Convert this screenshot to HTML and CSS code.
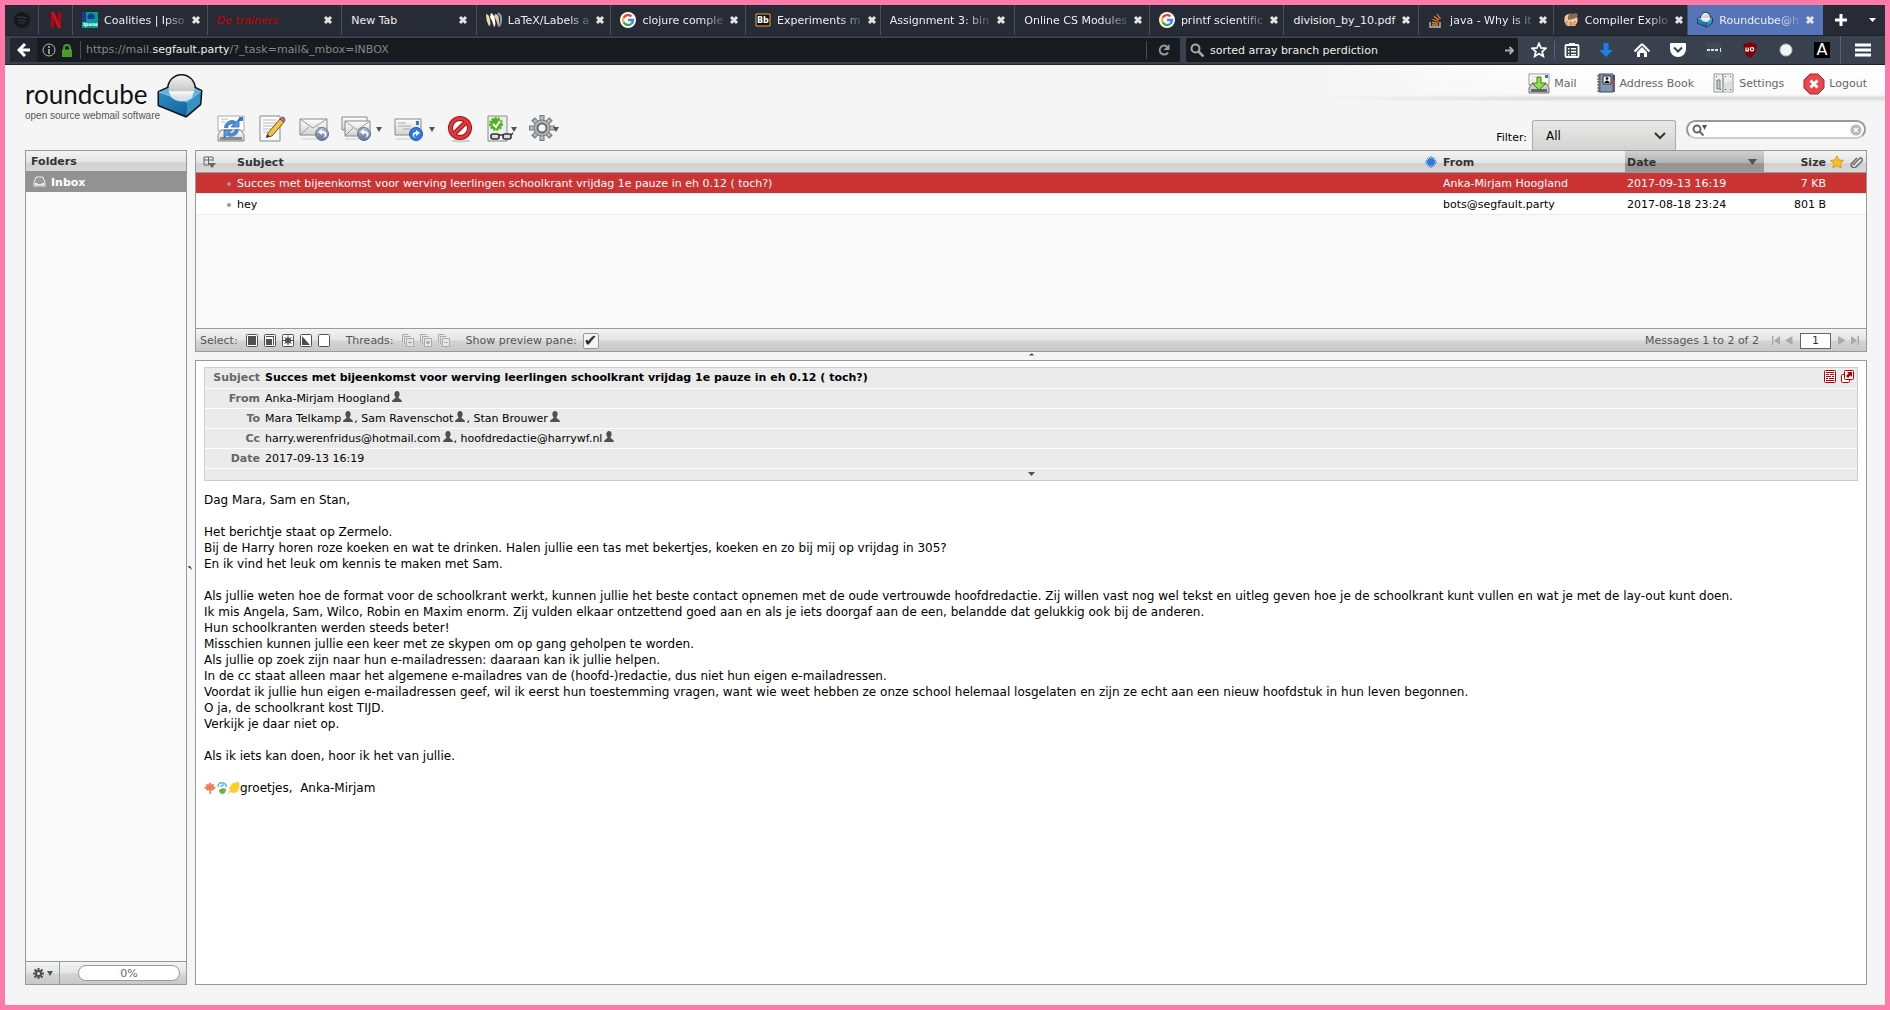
FILE: index.html
```html
<!DOCTYPE html>
<html lang="en">
<head>
    <meta charset="UTF-8">
    <meta name="viewport" content="width=device-width, initial-scale=1.0">
    <title>Roundcube Webmail :: Inbox</title>
    <link rel="stylesheet" href="styles.css">
</head>
<body>
    <!-- shared icons -->
    <svg class="defs" width="0" height="0">
        <defs>
            <linearGradient id="g-blue" x1="0" y1="0" x2="0" y2="1"><stop offset="0" stop-color="#8ec1f0"/><stop offset="1" stop-color="#1f62c4"/></linearGradient>
            <linearGradient id="g-steel" x1="0" y1="0" x2="0" y2="1"><stop offset="0" stop-color="#b4c0d4"/><stop offset="1" stop-color="#5f7291"/></linearGradient>
            <linearGradient id="g-grey" x1="0" y1="0" x2="0" y2="1"><stop offset="0" stop-color="#fdfdfd"/><stop offset="1" stop-color="#d0d2d2"/></linearGradient>
            <linearGradient id="g-front" x1="0" y1="0" x2="1" y2="1"><stop offset="0" stop-color="#2f8fc4"/><stop offset="1" stop-color="#0f659c"/></linearGradient>
            <linearGradient id="g-ball" x1="0" y1="0" x2="0" y2="1"><stop offset="0" stop-color="#f2f2f0"/><stop offset="0.6" stop-color="#c6c8c6"/><stop offset="0.62" stop-color="#fbfbfb"/><stop offset="1" stop-color="#c9cbca"/></linearGradient>
        </defs>
        <symbol id="person" viewBox="0 0 10 12"><path d="M5 0a3 3 0 0 1 2.600 3C7.600 4.800 7 5.500 6.400 6.200 6.500 8 10 8 10 11H0C0 8 3.500 8 3.600 6.200 3 5.500 2.400 4.800 2.400 3A3 3 0 0 1 5 0z" fill="#505050"/></symbol>
        <symbol id="close" viewBox="0 0 10 10"><path d="M2 2l6 6M8 2l-6 6" stroke="#e4e4de" stroke-width="3"/></symbol>
        <symbol id="google" viewBox="0 0 16 16"><circle cx="8" cy="8" r="8" fill="#fff"/><g fill="none" stroke-width="2.400"><path d="M11.500 4.500A5 5 0 0 0 3.600 5.700" stroke="#ea4335"/><path d="M3.600 5.700a5 5 0 0 0 0 4.600" stroke="#fbbc05"/><path d="M3.600 10.300a5 5 0 0 0 7.600 1.500" stroke="#34a853"/><path d="M11.200 11.800A5 5 0 0 0 13 8H8" stroke="#4285f4"/></g></symbol>
        <symbol id="cube" viewBox="0 0 46 44">
            <g fill="#111" stroke="#111" stroke-width="3" stroke-linejoin="round">
                <path d="M2 18l9-4h27l6 3-1 13-14 12L2 31z"/>
                <circle cx="24.500" cy="14.500" r="13"/>
            </g>
            <path d="M2 18l9-4h27l6 3-14 12z" fill="#5fb3da"/>
            <path d="M2 18l28 10-1 14L2 31z" fill="url(#g-front)"/>
            <path d="M30 28l14-11-1 13-14 12z" fill="#3491c6"/>
            <path d="M2 18l28 10 14-11" fill="none" stroke="#8cc9e6"/>
            <circle cx="24.500" cy="14.500" r="13" fill="url(#g-ball)"/>
            <path d="M15 22q10 7 20 0" fill="none" stroke="#d4e4ec" stroke-width="3"/>
        </symbol>
        <symbol id="back-badge" viewBox="0 0 14 14"><circle cx="7" cy="7" r="6.500" fill="url(#g-steel)" stroke="#667792"/><path d="M8 11c3-2 2-5-1-5V8L3 5l4-3v2c6 0 6 6 1 7z" fill="#fff"/></symbol>
    </svg>

    <header class="browser">
        <nav class="tabs">
            <a href="#" class="tab pinned" aria-label="Spotify"><svg width="16" height="16" viewBox="0 0 16 16"><circle cx="8" cy="8" r="8" fill="#15171b"/><path d="M3 5.500q5-1.500 10 1M4 8.500q4-1 8 1M4.500 11q3-1 6 1" stroke="#30343c" fill="none" stroke-width="1.400"/></svg></a>
            <a href="#" class="tab pinned" aria-label="Netflix"><svg width="10" height="16" viewBox="0 0 10 16"><path d="M0 0h3v16H0zM7 0h3v16H7z" fill="#b1060f"/><path d="M0 0h3l7 16H7z" fill="#e50914"/></svg></a>
            <a href="#" class="tab"><svg width="16" height="16" viewBox="0 0 16 16"><path fill="#009d9c" d="M0 0h16v16H0z"/><path fill="#27348b" d="M0 0h4v10H0z"/><circle cx="9" cy="5" r="3.500" fill="#27348b"/><path d="M5 8h7" stroke="#009d9c" stroke-width="2"/><text x="1" y="14" font-size="5" font-weight="bold" fill="#fff">Ipsos</text></svg><span class="cut">Coalities | Ipso</span><svg class="x"><use href="#close"/></svg></a>
            <a href="#" class="tab unread"><span>De trainers</span><svg class="x"><use href="#close"/></svg></a>
            <a href="#" class="tab"><span>New Tab</span><svg class="x"><use href="#close"/></svg></a>
            <a href="#" class="tab"><svg width="16" height="16" viewBox="0 0 16 16"><path d="M0 2q3 0 4 6t-1 6Q0 9 0 2z" fill="#efd9a4"/><path d="M5 1q3 1 4 7t-1 7Q7 10 4 5z" fill="#fff"/><path d="M9 2q4 0 4 6t-1 7q-1-7-4-10z" fill="#e9cf8f"/><path d="M12 1q4 3 3 8t-2 5" stroke="#7ba6d4" fill="none" stroke-width="2"/></svg><span class="cut">LaTeX/Labels a</span><svg class="x"><use href="#close"/></svg></a>
            <a href="#" class="tab"><svg width="16" height="16"><use href="#google"/></svg><span class="cut">clojure comple</span><svg class="x"><use href="#close"/></svg></a>
            <a href="#" class="tab"><svg width="16" height="14" viewBox="0 0 16 14"><path d="M1 1h14v12H1z" fill="#111" stroke="#f0a92c"/><text x="2" y="10" font-size="8" font-weight="bold" fill="#fff">Bb</text></svg><span class="cut">Experiments m</span><svg class="x"><use href="#close"/></svg></a>
            <a href="#" class="tab"><span class="cut">Assignment 3: bin</span><svg class="x"><use href="#close"/></svg></a>
            <a href="#" class="tab"><span class="cut">Online CS Modules</span><svg class="x"><use href="#close"/></svg></a>
            <a href="#" class="tab"><svg width="16" height="16"><use href="#google"/></svg><span class="cut">printf scientific</span><svg class="x"><use href="#close"/></svg></a>
            <a href="#" class="tab"><span>division_by_10.pdf</span><svg class="x"><use href="#close"/></svg></a>
            <a href="#" class="tab"><svg width="16" height="16" viewBox="0 0 16 16"><path d="M2 10v5h10v-5" fill="none" stroke="#bcbbbb" stroke-width="1.400"/><path d="M4 13h6M4 10.500l6 .6M4.500 7.500l6 2M6 4.500l5 3.400M9 2l3.500 5" stroke="#f48024" stroke-width="1.300"/></svg><span class="cut">java - Why is it</span><svg class="x"><use href="#close"/></svg></a>
            <a href="#" class="tab"><svg width="16" height="16" viewBox="0 0 16 16"><path d="M2 4q-2 6 2 10h8q4-5 2-9-3 1-5-1-3-4-7 0z" fill="#f0c59b"/><path d="M5 4l2-3 2 1 3-1 3 1-1 3-4 2-5 1z" fill="#8a6a4e"/><path d="M5 10H3v3h2M8 10H7v3h2zM13 10h-2v3h2" fill="none" stroke="#c07a45"/></svg><span class="cut">Compiler Explo</span><svg class="x"><use href="#close"/></svg></a>
            <a href="#" class="tab active"><svg width="16" height="16"><use href="#cube"/></svg><span class="cut">Roundcube@h</span><svg class="x"><use href="#close"/></svg></a>
            <div class="tab-tools">
                <button aria-label="New tab"><svg width="14" height="14"><path d="M7 1v12M1 7h12" stroke="#fff" stroke-width="3"/></svg></button>
                <button aria-label="All tabs"><svg width="7" height="4"><path d="M0 0h7L3.500 4z" fill="#fff"/></svg></button>
            </div>
        </nav>
        <div class="navbar">
            <div class="urlbar">
                <button class="back" aria-label="Back"><svg width="14" height="14"><path d="M8 1L2 7l6 6M2 7h11" fill="none" stroke="#fff" stroke-width="3"/></svg></button>
                <svg width="14" height="14"><circle cx="7" cy="7" r="6" fill="none" stroke="#b9bbbe"/><path d="M7 6v5M7 3v2" stroke="#b9bbbe" stroke-width="1.500"/></svg>
                <svg width="10" height="13"><path d="M2 6V4a3 3 0 0 1 6 0v2" fill="none" stroke="#4c9a2a" stroke-width="2"/><path d="M0 5.500h10V13H0z" fill="#4c9a2a"/></svg>
                <a href="#" class="url">https://mail.<b>segfault.party</b>/?_task=mail&amp;_mbox=INBOX</a>
                <button class="reload" aria-label="Reload"><svg width="12" height="12"><path d="M9.500 3A4.500 4.500 0 1 0 10 8.500" fill="none" stroke="#8e9ba8" stroke-width="2"/><path d="M11.500 0v6h-6z" fill="#8e9ba8"/></svg></button>
            </div>
            <div class="websearch">
                <svg width="14" height="14"><circle cx="5.500" cy="5.500" r="4" fill="none" stroke="#a9a9a9" stroke-width="2"/><path d="M8.500 8.500l5 5" stroke="#a9a9a9" stroke-width="2.500"/></svg>
                <input type="text" aria-label="Web search" value="sorted array branch perdiction">
                <svg width="9" height="9"><path d="M0 4.500h8M4.500 1L8 4.500 4.500 8" fill="none" stroke="#a9adb2" stroke-width="2"/></svg>
            </div>
            <div class="browser-icons">
                <button class="star" aria-label="Bookmark"><svg width="16" height="16"><path d="M8 1.500l2 4.500 4.800.4-3.600 3.200 1.100 4.700L8 11.800l-4.300 2.500 1.100-4.700L1.200 6.400 6 6z" fill="none" stroke="#fff" stroke-width="1.800"/></svg></button>
                <button class="list" aria-label="Bookmarks list"><svg width="16" height="16"><rect x="1.500" y="3" width="13" height="12" rx="1" fill="none" stroke="#fff" stroke-width="1.800"/><path d="M5 1h6v3H5zM4 6h1.500v1.500H4zM4 9h1.500v1.500H4zM4 12h1.500v1.500H4zM7 6h5v1.500H7zM7 9h5v1.500H7zM7 12h5v1.500H7z" fill="#fff"/></svg></button>
                <button aria-label="Downloads"><svg width="16" height="16"><path d="M5.500 1h5v7H15l-7 7-7-7h4.500z" fill="#1a7fe8"/></svg></button>
                <button aria-label="Home"><svg width="16" height="16"><path d="M8 2L15.500 9.500M8 2L.5 9.500" stroke="#fff" stroke-width="2"/><path d="M3 10l5-5 5 5v5h-3v-4H6v4H3z" fill="#fff"/></svg></button>
                <button aria-label="Pocket"><svg width="16" height="16"><path d="M0 2q0-1 1-1h14q1 0 1 1v5a8 8 0 0 1-16 0z" fill="#fff"/><path d="M4 5.500l4 4 4-4" fill="none" stroke="#39404d" stroke-width="2"/></svg></button>
                <button aria-label="Passwords"><svg width="16" height="16"><path d="M0 0h16v16H0z" fill="#3c4b52"/><path d="M1 7h3v2H1zM5 7h3v2H5zM9 7h3v2H9zM14 6h1v4h-1z" fill="#dde"/></svg></button>
                <button aria-label="uBlock"><svg width="16" height="16"><path d="M8 0q3 2 6.500 2Q15 12 8 16 1 12 1.500 2 5 2 8 0z" fill="#800000"/><path d="M4 5.500v3.300h2.300V5.500" fill="none" stroke="#fff" stroke-width="1.200"/><circle cx="10" cy="7.300" r="1.700" fill="none" stroke="#fff" stroke-width="1.200"/></svg></button>
                <button aria-label="Theme"><svg width="16" height="16"><circle cx="8" cy="8" r="6" fill="#f4f4f4" stroke="#b5b8bc"/></svg></button>
                <button aria-label="Font"><span class="letter-a">A</span></button>
                <button class="menu" aria-label="Menu"><svg width="16" height="14"><path d="M0 2h16M0 7h16M0 12h16" stroke="#fff" stroke-width="3"/></svg></button>
            </div>
        </div>
    </header>

    <main class="webmail">
        <div class="top">
            <div class="brand">
                <div class="brand-text">
                    <div class="name">roundcube</div>
                    <div class="tagline">open source webmail software</div>
                </div>
                <svg width="46" height="44"><use href="#cube"/></svg>
            </div>
            <div class="toolbar">
                <button aria-label="Check mail"><svg width="30" height="28"><path d="M1 1h26v15H1z" fill="#fff" stroke="#aaa"/><path d="M4 4h7M4 7h4" stroke="#bbb"/><path d="M22 2h4v4h-4z" fill="#2f78dc"/><path d="M4 15h20l3 5v6H1v-6z" fill="url(#g-grey)" stroke="#888"/><path d="M3 22h22v3H3z" fill="#8b8d8d"/><path d="M9 13a6 6 0 0 1 9-5" fill="none" stroke="#4a8ad4" stroke-width="4"/><path d="M22 4v8h-8z" fill="#5b9ade" stroke="#2b68b5" stroke-width=".8"/><path d="M20 14a6 6 0 0 1-9 5" fill="none" stroke="#4a8ad4" stroke-width="4"/><path d="M7 23v-8h8z" fill="#5b9ade" stroke="#2b68b5" stroke-width=".8"/></svg></button>
                <button aria-label="Compose"><svg width="28" height="28"><path d="M1 1h20v25H1z" fill="#fafafa" stroke="#888"/><path d="M4 5h13M4 8h13M4 11h11M4 14h8M4 17h5" stroke="#bbb"/><path d="M9 18L21 4l4 3-12 14-5 1z" fill="#f3c545" stroke="#6d5116"/><path d="M21 4l2-2q3 0 3 3l-1 2z" fill="#c67378" stroke="#825053"/><path d="M7 23l1-4 3 2.500z" fill="#333"/></svg></button>
                <button aria-label="Reply"><svg width="30" height="28"><path d="M1 4h27v16H1z" fill="url(#g-grey)" stroke="#888"/><path d="M1 4l13 9L28 4M1 20l9-8M28 20l-9-8" fill="none" stroke="#999"/><path d="M2 24h22" stroke="#ccc"/><use href="#back-badge" x="16" y="12" width="14" height="14"/></svg></button>
                <button aria-label="Reply all" class="has-menu"><svg width="30" height="28"><path d="M1 2h25v13H1z" fill="url(#g-grey)" stroke="#888"/><path d="M4 6h25v15H4z" fill="url(#g-grey)" stroke="#888"/><path d="M4 6l12 9 13-9M4 21l8-8M29 21l-8-8" fill="none" stroke="#999"/><path d="M4 24h20" stroke="#ccc"/><use href="#back-badge" x="16" y="12" width="14" height="14"/></svg><i></i></button>
                <button aria-label="Forward" class="has-menu"><svg width="30" height="28"><path d="M1 4h26v16H1z" fill="url(#g-grey)" stroke="#888"/><path d="M4 8h8M4 11h13M9 14h8" stroke="#aaa"/><path d="M22 6h3v4h-3z" fill="#2f78dc"/><path d="M2 24h20" stroke="#ccc"/><circle cx="22" cy="19" r="6.500" fill="#2f7be0" stroke="#1c56ae"/><path d="M21 23c-4-3-2-6 1-6v-2l4 3-4 3v-2q-3 0-1 4z" fill="#fff"/></svg><i></i></button>
                <button aria-label="Delete"><svg width="28" height="28"><ellipse cx="14" cy="26" rx="10" ry="1.500" fill="#ccc"/><circle cx="13" cy="13" r="9.500" fill="#fff" stroke="#a40e12" stroke-width="5"/><path d="M7 19L19 7" stroke="#a40e12" stroke-width="5"/><circle cx="13" cy="13" r="9.500" fill="none" stroke="#dc3b3e" stroke-width="3"/><path d="M6 20L20 6" stroke="#dc3b3e" stroke-width="3"/></svg></button>
                <button aria-label="Mark" class="close-menu"><svg width="28" height="28"><path d="M1 1h19v25H1z" fill="#eee" stroke="#888"/><circle cx="9" cy="9" r="5.500" fill="#4fb41a" stroke="#4fb41a" stroke-width="3" stroke-dasharray="2 1"/><path d="M6 9l3 3 4-6" stroke="#fff" stroke-width="2" fill="none"/><g fill="#ddd" stroke="#333" stroke-width="1.600"><rect x="4" y="19" width="8" height="5" rx="2"/><rect x="16" y="19" width="8" height="5" rx="2"/><path d="M12 20h4M24 20l2-2"/></g></svg><i></i></button>
                <button aria-label="More actions" class="close-menu"><svg width="28" height="28"><g stroke="#75797d" stroke-width="5"><path d="M13 0v26M0 13h26M4 4l18 18M22 4L4 22"/></g><g stroke="#b9bcbf" stroke-width="3"><path d="M13 1v24M1 13h24M5 5l16 16M21 5L5 21"/></g><circle cx="13" cy="13" r="8" fill="#b4b7ba" stroke="#777b7f"/><circle cx="13" cy="13" r="4.500" fill="#f5f5f5" stroke="#686c70" stroke-width="2"/></svg><i></i></button>
            </div>
            <div class="top-right">
                <nav class="taskbar">
                    <a href="#"><svg width="22" height="22"><path d="M1 1h20v11H1z" fill="#fff" stroke="#999"/><path d="M3 4h6M3 7h4" stroke="#ccc"/><path d="M17 2h3v3h-3z" fill="#2f78dc"/><path d="M3 11h16l2 4v5H1v-5z" fill="#c9cbcb" stroke="#777"/><path d="M3 16h16v3H3z" fill="#666"/><path d="M9 4h4v6h5l-7 7-7-7h5z" fill="#8ce04a" stroke="#3d7d10"/></svg>Mail</a>
                    <a href="#"><svg width="20" height="22"><path d="M15 2h4v17h-4z" fill="#b4496d"/><path d="M16 2h3v5h-3z" fill="#5e3f87"/><path d="M3 1h14v18H3z" fill="#8298b0" stroke="#40505f"/><path d="M7 3h8v8H7z" fill="#eee" stroke="#333"/><circle cx="11" cy="5.500" r="1.300"/><path d="M8 10q3-5 6 0z"/><path d="M1 3h4M1 6h4M1 9h4M1 12h4M1 15h4M1 18h4" stroke="#555"/></svg>Address Book</a>
                    <a href="#"><svg width="22" height="22"><path d="M1 1h9v18H1zM10 1h10v18H10z" fill="#eef0f0" stroke="#999"/><path d="M4 7h3v9H4z" fill="#ccc" stroke="#777"/><path d="M11 11l8-4v12h-8z" fill="#dcdede"/><path d="M3 3h1v1H3zM7 16h1v1H7zM17 3h1v1h-1zM17 16h1v1h-1zM12 3h1v1h-1zM12 16h1v1h-1z" fill="#666"/></svg>Settings</a>
                    <a href="#"><svg width="22" height="22"><path d="M7 1h8l6 6v8l-6 6H7l-6-6V7z" fill="#e8474f" stroke="#b3232b"/><path d="M7.500 7.500l7 7M14.500 7.500l-7 7" stroke="#fff" stroke-width="3"/></svg>Logout</a>
                </nav>
                <div class="filterbar">
                    <label for="filter">Filter:</label>
                    <div class="select-wrap">
                        <select id="filter"><option>All</option></select>
                        <svg width="12" height="8"><path d="M1 1l5 5 5-5" fill="none" stroke="#333" stroke-width="2"/></svg>
                    </div>
                    <div class="quicksearch">
                        <svg width="18" height="12"><circle cx="5" cy="5" r="3.500" fill="none" stroke="#666" stroke-width="2"/><path d="M7.500 7.500l4 4" stroke="#666" stroke-width="2"/><path d="M10 1h5l-2.500 5z" fill="#555"/></svg>
                        <input type="text" aria-label="Search messages">
                        <svg width="12" height="12"><circle cx="6" cy="6" r="5.500" fill="#b8b8b8"/><path d="M4 4l4 4M8 4L4 8" stroke="#fff" stroke-width="1.600"/></svg>
                    </div>
                </div>
            </div>
        </div>

        <div class="columns">
            <aside class="folders box">
                <h2>Folders</h2>
                <ul>
                    <li><a href="#"><svg width="13" height="14"><path d="M3 1h7l2 6v3H1V7z" fill="#999" stroke="#eee"/><path d="M2 7h2l1 1h3l1-1h2v2H2z" fill="#eee"/></svg>Inbox</a></li>
                </ul>
                <div class="bar">
                    <button class="folder-menu" aria-label="Folder actions"><svg width="11" height="11"><path d="M5.500 0v11M0 5.500h11M1.500 1.500l8 8M9.500 1.500l-8 8" stroke="#505050" stroke-width="2"/><circle cx="5.500" cy="5.500" r="2.500" fill="#e4e4e4" stroke="#505050" stroke-width="2"/></svg><i></i></button>
                    <div class="quota">0%</div>
                </div>
            </aside>
            <div class="splitter vertical"><svg width="4" height="5"><path d="M0 2q2-3 4 3l-2-2z" fill="#222"/></svg></div>
            <div class="mail">
                <section class="box messages">
                    <table>
                        <thead>
                            <tr>
                                <th class="c-list"><svg width="13" height="12"><path d="M10 5V1H1v8h5M1 4h9M5.500 1v8" fill="none" stroke="#666"/><path d="M5 7h8l-4 5z" fill="#666"/></svg></th>
                                <th class="c-subject">Subject</th>
                                <th class="c-status"><svg width="12" height="12"><path d="M6 0v12M0 6h12M2 2l8 8M10 2l-8 8M4 1l4 10M8 1L4 11M1 4l10 4M11 4L1 8" stroke="#2f78dc"/><circle cx="6" cy="6" r="3.500" fill="#2f78dc"/></svg></th>
                                <th class="c-from">From</th>
                                <th class="c-date sorted">Date<svg width="9" height="6"><path d="M0 0h9L4.500 6z" fill="#555"/></svg></th>
                                <th class="c-size">Size</th>
                                <th class="c-flag"><svg width="14" height="14"><path d="M7 1l2 4 4.500.5-3.300 3 .9 4.500L7 10.800 2.900 13l.9-4.500-3.300-3L5 5z" fill="#f6c02c" stroke="#d99c1f"/></svg></th>
                                <th class="c-attach"><svg width="14" height="12"><path d="M3 9l6-6q2-2 3 0t-1 3l-5 5q-2 1.500-4 0t0-4l5-5" fill="none" stroke="#666" stroke-width="1.400"/></svg></th>
                            </tr>
                        </thead>
                        <tbody>
                            <tr class="selected">
                                <td class="c-list"><i class="dot"></i></td>
                                <td class="c-subject">Succes met bijeenkomst voor werving leerlingen schoolkrant vrijdag 1e pauze in eh 0.12 ( toch?)</td>
                                <td></td>
                                <td class="c-from">Anka-Mirjam Hoogland</td>
                                <td class="c-date">2017-09-13 16:19</td>
                                <td class="c-size">7 KB</td>
                                <td></td>
                                <td></td>
                            </tr>
                            <tr>
                                <td class="c-list"><i class="dot"></i></td>
                                <td class="c-subject">hey</td>
                                <td></td>
                                <td class="c-from">bots@segfault.party</td>
                                <td class="c-date">2017-08-18 23:24</td>
                                <td class="c-size">801 B</td>
                                <td></td>
                                <td></td>
                            </tr>
                        </tbody>
                    </table>
                    <div class="bar">
                        <span>Select:</span>
                        <div class="icons">
                            <button aria-label="All"><svg width="14" height="14"><rect x="1.500" y=".5" width="11" height="12" rx="1" fill="#fff" stroke="#505050"/><path d="M3 2h8v9H3z" fill="#505050"/></svg></button>
                            <button aria-label="Current page"><svg width="14" height="14"><rect x="1.500" y=".5" width="11" height="12" rx="1" fill="#fff" stroke="#505050"/><path d="M3 5h6v6H3zM3 2h8v9h-1V3H3z" fill="#505050"/></svg></button>
                            <button aria-label="Unread"><svg width="14" height="14"><rect x="1.500" y=".5" width="11" height="12" rx="1" fill="#fff" stroke="#505050"/><circle cx="7" cy="6.500" r="3" fill="#505050"/><path d="M7 1.500v10M2 6.500h10M3.500 3l7 7M10.500 3l-7 7" stroke="#505050"/></svg></button>
                            <button aria-label="Invert"><svg width="14" height="14"><rect x="1.500" y=".5" width="11" height="12" rx="1" fill="#fff" stroke="#505050"/><path d="M3 2l8 9H3z" fill="#505050"/></svg></button>
                            <button aria-label="None"><svg width="14" height="14"><rect x="1.500" y=".5" width="11" height="12" rx="1" fill="#fff" stroke="#505050"/></svg></button>
                        </div>
                        <span>Threads:</span>
                        <div class="icons">
                            <button aria-label="Expand all"><svg width="14" height="14" fill="#e8e8e8" stroke="#aaa"><path d="M1.500 8V.5h6M3.500 10V2.500h6M5.500 4.500h7v8h-7zM7 8.500h4M9 6.500v4"/></svg></button>
                            <button aria-label="Expand unread"><svg width="14" height="14" fill="#e8e8e8" stroke="#aaa"><path d="M1.500 8V.5h6M3.500 10V2.500h6M5.500 4.500h7v8h-7zM7 8.500h4M9 6.500v4M7.500 7l3 3M10.500 7l-3 3"/></svg></button>
                            <button aria-label="Collapse all"><svg width="14" height="14" fill="#e8e8e8" stroke="#aaa"><path d="M1.500 8V.5h6M3.500 10V2.500h6M5.500 4.500h7v8h-7zM7 8.500h4"/></svg></button>
                        </div>
                        <label class="pane-toggle">Show preview pane: <input type="checkbox" checked></label>
                        <span class="count">Messages 1 to 2 of 2</span>
                        <div class="pager">
                            <button aria-label="First page"><svg width="8" height="9"><path d="M0 0h1.500v9H0zM8 0v9L2 4.500z" fill="#aaa"/></svg></button>
                            <button aria-label="Previous page"><svg width="8" height="9"><path d="M7.500 0v9L0 4.500z" fill="#aaa"/></svg></button>
                            <input type="text" aria-label="Page" value="1">
                            <button aria-label="Next page"><svg width="8" height="9"><path d="M0 0v9l7.500-4.500z" fill="#aaa"/></svg></button>
                            <button aria-label="Last page"><svg width="8" height="9"><path d="M6.500 0H8v9H6.500zM0 0v9l6-4.500z" fill="#aaa"/></svg></button>
                        </div>
                    </div>
                </section>
                <div class="splitter horizontal"><svg width="5" height="4"><path d="M0 3q3-5 5 0l-2-1z" fill="#222"/></svg></div>
                <article class="box preview">
                    <div class="headers">
                        <table>
                            <tr><th>Subject</th><td class="subject">Succes met bijeenkomst voor werving leerlingen schoolkrant vrijdag 1e pauze in eh 0.12 ( toch?)</td></tr>
                            <tr><th>From</th><td>Anka-Mirjam Hoogland<svg class="person"><use href="#person"/></svg></td></tr>
                            <tr><th>To</th><td>Mara Telkamp<svg class="person"><use href="#person"/></svg>, Sam Ravenschot<svg class="person"><use href="#person"/></svg>, Stan Brouwer<svg class="person"><use href="#person"/></svg></td></tr>
                            <tr><th>Cc</th><td>harry.werenfridus@hotmail.com<svg class="person"><use href="#person"/></svg>, hoofdredactie@harrywf.nl<svg class="person"><use href="#person"/></svg></td></tr>
                            <tr><th>Date</th><td>2017-09-13 16:19</td></tr>
                        </table>
                        <button class="expand" aria-label="Show all headers"><svg width="7" height="4"><path d="M0 0h7L3.500 4z" fill="#505050"/></svg></button>
                        <div class="links">
                            <a href="#" aria-label="Plain text"><svg width="14" height="14"><rect x="1.500" y=".5" width="11" height="12" rx="1" fill="#fff" stroke="#b80000"/><path d="M3 2.500h8M3 4.500h3M7 4.500h4M3 6.500h5M9 6.500h2M3 8.500h2M6 8.500h5M3 10.500h8" stroke="#b80000"/></svg></a>
                            <a href="#" aria-label="Open in new window"><svg width="14" height="14"><rect x=".5" y="4.500" width="8" height="8" rx="1" fill="#fff" stroke="#b80000"/><rect x="3.500" y=".5" width="9" height="9" rx="1" fill="#fff" stroke="#b80000"/><path d="M6 2h5v5L9.500 5.500 7 8 5 6l2.500-2.500z" fill="#b80000"/></svg></a>
                        </div>
                    </div>
                    <div class="message-body">Dag Mara, Sam en Stan,

Het berichtje staat op Zermelo.
Bij de Harry horen roze koeken en wat te drinken. Halen jullie een tas met bekertjes, koeken en zo bij mij op vrijdag in 305?
En ik vind het leuk om kennis te maken met Sam.

Als jullie weten hoe de format voor de schoolkrant werkt, kunnen jullie het beste contact opnemen met de oude vertrouwde hoofdredactie. Zij willen vast nog wel tekst en uitleg geven hoe je de schoolkrant kunt vullen en wat je met de lay-out kunt doen.
Ik mis Angela, Sam, Wilco, Robin en Maxim enorm. Zij vulden elkaar ontzettend goed aan en als je iets doorgaf aan de een, belandde dat gelukkig ook bij de anderen.
Hun schoolkranten werden steeds beter!
Misschien kunnen jullie een keer met ze skypen om op gang geholpen te worden.
Als jullie op zoek zijn naar hun e-mailadressen: daaraan kan ik jullie helpen.
In de cc staat alleen maar het algemene e-mailadres van de (hoofd-)redactie, dus niet hun eigen e-mailadressen.
Voordat ik jullie hun eigen e-mailadressen geef, wil ik eerst hun toestemming vragen, want wie weet hebben ze onze school helemaal losgelaten en zijn ze echt aan een nieuw hoofdstuk in hun leven begonnen.
O ja, de schoolkrant kost TIJD.
Verkijk je daar niet op.

Als ik iets kan doen, hoor ik het van jullie.

<svg class="leaf" viewBox="0 0 12 12"><path d="M6 0l1.500 2.500L10 2l-.5 2.500L12 5 9 8.500H7V12H5.500V8.500H3L0 5l2.500-.5L2 2l2.500.5z" fill="#f27a5e"/></svg><svg class="leaf" viewBox="0 0 12 12"><path d="M2 5q0-5 5-4 4 1 3 4M5 5q0-2 3-2" fill="none" stroke="#5fb4e0" stroke-width="1.500"/><path d="M3 8q3-3 7-1 0 5-4 5-3-1-3-4z" fill="#6cb33f"/></svg><svg class="leaf" viewBox="0 0 12 12"><path d="M0 12q1-3 2-4-2-3 1-4 0-3 3-3 2-1 5-1 1 4 0 6-1 4-4 5-3 0-5-1l-1 2z" fill="#fccf2c"/></svg>groetjes,&nbsp; Anka-Mirjam</div>
                </article>
            </div>
        </div>
    </main>
</body>
</html>
```

FILE: styles.css
```css
* {
    box-sizing: border-box;
}

body {
    margin: 0;
    height: 100vh;
    display: flex;
    flex-direction: column;
    border: 5px solid #ff79a9;
    background-color: #f5f5f5;
    font-family: "DejaVu Sans", Verdana, sans-serif;
    font-size: 11px;
    color: #000;
}

.defs {
    position: absolute;
}

a {
    color: inherit;
    text-decoration: none;
}

button {
    display: flex;
    align-items: center;
    justify-content: center;
    padding: 0;
    border: none;
    background: none;
    cursor: pointer;
}

input, select {
    font-family: inherit;
    font-size: 11px;
}

svg {
    flex: none;
}

/* browser chrome */
.browser {
    flex: none;
    background-color: #39404e;
    border-bottom: 1px solid #1e222b;
    color: #eee;
}

.tabs {
    display: flex;
    height: 31px;
    background-color: #272b35;
    border-bottom: 1px solid #1e222b;
}

.tab {
    flex: 1 1 0;
    min-width: 0;
    display: flex;
    align-items: center;
    gap: 6px;
    padding: 0 8px 0 9px;
    border-right: 1px solid #4a4e57;
}

.tab.pinned {
    flex: none;
    width: 34px;
    padding: 0;
    justify-content: center;
}

.tab span {
    white-space: nowrap;
}

.tab .x {
    margin-left: auto;
}

/* long titles fade out at the end */
.tab .cut {
    mask-image: linear-gradient(to right, #000 75%, rgba(0, 0, 0, 0.2));
}

.tab.unread {
    color: #c80000;
    font-style: italic;
}

.tab.active {
    background-color: #5575b8;
    border-color: #5575b8;
}

.x {
    width: 10px;
    height: 10px;
}

.tab-tools {
    display: flex;
    width: 62px;
    justify-content: space-between;
    padding: 0 9px 0 11px;
}

.navbar {
    display: flex;
    align-items: center;
    height: 28px;
    padding-left: 5px;
}

.urlbar, .websearch {
    display: flex;
    align-items: center;
    height: 24px;
    gap: 6px;
    background-color: #171a1e;
    border-radius: 2px;
}

.urlbar {
    flex: 1;
    margin-right: 6px;
}

.back {
    width: 27px;
    height: 24px;
    background-color: #23272f;
    margin-right: -1px;
}

.url {
    flex: 1;
    margin-left: 2px;
    padding-left: 5px;
    border-left: 1px solid #4a4e55;
    line-height: 18px;
    color: #85888c;
}

.url b {
    font-weight: normal;
    color: #eee;
}

.reload {
    width: 34px;
    height: 18px;
    border-left: 1px solid #4a4e55;
}

.websearch {
    width: 332px;
    padding: 0 4px;
}

.websearch input {
    flex: 1;
    padding: 0;
    border: none;
    background: none;
    color: #eee;
}

.browser-icons {
    display: flex;
    align-items: center;
    padding-left: 6px;
}

.browser-icons button {
    width: 36px;
    height: 18px;
}

.browser-icons .star {
    width: 30px;
}

.browser-icons .list {
    width: 34px;
    border-left: 1px solid #5a606c;
}

.browser-icons .menu {
    width: 45px;
    height: 28px;
    border-left: 1px solid #5a606c;
}

.letter-a {
    width: 16px;
    background-color: #000;
    color: #fff;
    font: 16px/16px "DejaVu Sans", sans-serif;
}

/* page header */
.webmail {
    flex: 1;
    min-height: 0;
    display: flex;
    flex-direction: column;
}

.top {
    display: flex;
    height: 85px;
    padding-left: 20px;
}

.brand {
    display: flex;
    width: 192px;
    padding-top: 9px;
    gap: 2px;
}

.brand-text {
    width: 130px;
    white-space: nowrap;
}

.name {
    padding-top: 4px;
    font: 26px/32px Lato, sans-serif;
    color: #111;
}

.tagline {
    font: 10px/12px "Liberation Sans", sans-serif;
    color: #555;
}

.toolbar {
    display: flex;
    align-items: flex-start;
    padding-top: 50px;
    gap: 12px;
}

.toolbar button {
    gap: 5px;
}

.toolbar .close-menu {
    gap: 0;
}

.close-menu i {
    margin-left: -4px;
}

i {
    border: 3px solid transparent;
    border-top: 5px solid #555;
    border-bottom: none;
}

.top-right {
    flex: 1;
    display: flex;
    flex-direction: column;
    align-items: flex-end;
    justify-content: space-between;
}

.taskbar {
    display: flex;
    align-items: center;
    justify-content: flex-end;
    gap: 19px;
    width: 570px;
    height: 37px;
    padding-right: 18px;
    background: linear-gradient(to right, #f5f5f5, rgba(245, 245, 245, 0) 45%), linear-gradient(#fff, #fafafa 80%, #d8d8d8 90%, #f5f5f5);
    color: #666;
}

.taskbar a {
    display: flex;
    align-items: center;
    gap: 4px;
}

.filterbar {
    display: flex;
    align-items: flex-start;
    padding-right: 19px;
}

.filterbar label {
    padding: 11px 5px 0 0;
}

.select-wrap {
    position: relative;
    margin-right: 10px;
}

.select-wrap svg {
    position: absolute;
    right: 10px;
    top: 12px;
    pointer-events: none;
}

.select-wrap select {
    display: block;
    appearance: none;
    width: 144px;
    height: 30px;
    padding-left: 13px;
    border: 1px solid #aaa;
    border-bottom: none;
    border-radius: 3px 3px 0 0;
    background: linear-gradient(#e9e9e7, #d3d4d2);
    font-size: 12px;
    color: #000;
}

.quicksearch {
    display: flex;
    align-items: center;
    width: 180px;
    height: 19px;
    padding: 0 2px 0 4px;
    border: 2px solid #999;
    border-bottom-color: #ccc;
    border-radius: 10px;
    background-color: #fff;
}

.quicksearch input {
    flex: 1;
    min-width: 0;
    height: 14px;
    border: none;
    outline: none;
    background: none;
}

/* panels */
.columns {
    flex: 1;
    min-height: 0;
    display: flex;
    padding: 0 18px 20px 20px;
}

.box {
    border: 1px solid #999;
    background-color: #f9f9f9;
    display: flex;
    flex-direction: column;
}

.folders {
    width: 162px;
}

.folders h2 {
    margin: 0;
    height: 20px;
    padding-left: 5px;
    font-size: 11px;
    line-height: 22px;
    color: #333;
    background: linear-gradient(#f2f4f3, #e2e5e4 55%, #d0d0d0 60%, #d8d8d8);
}

.folders ul {
    flex: 1;
    margin: 0;
    padding: 0;
    list-style: none;
}

.folders li a {
    display: flex;
    align-items: center;
    gap: 5px;
    height: 21px;
    padding: 2px 0 0 7px;
    background-color: #929292;
    color: #fff;
    font-weight: bold;
}

.bar {
    display: flex;
    align-items: center;
    flex: none;
    height: 23px;
    border-top: 1px solid #999;
    background: linear-gradient(#f2f4f3, #e2e5e4 50%, #d4d4d4 55%, #c8c8c8);
    color: #555;
}

.folder-menu {
    width: 34px;
    height: 22px;
    gap: 3px;
    border-right: 1px solid #999;
}

.quota {
    flex: 1;
    height: 16px;
    margin: 0 6px 0 18px;
    border: 1px solid #999;
    border-radius: 8px;
    background-color: #fff;
    line-height: 15px;
    text-align: center;
    color: #666;
}

.splitter {
    flex: none;
    display: flex;
    align-items: center;
    justify-content: center;
}

.vertical {
    width: 8px;
    padding-right: 2px;
}

.horizontal {
    height: 8px;
    padding-bottom: 2px;
}

.mail {
    flex: 1;
    min-width: 0;
    display: flex;
    flex-direction: column;
}

.messages {
    height: 202px;
}

.messages table {
    width: 100%;
    table-layout: fixed;
    border-collapse: collapse;
    margin-bottom: auto;
}

.messages th {
    height: 21px;
    padding: 2px 2px 0;
    border-bottom: 1px solid #999;
    background: linear-gradient(#f2f4f3, #e2e5e4 55%, #d0d0d0 60%, #d8d8d8);
    text-align: left;
    color: #333;
}

.messages td {
    height: 21px;
    padding: 2px 2px 0;
    border-bottom: 1px solid #ebebeb;
    background-color: #fff;
    white-space: nowrap;
}

.messages .selected td {
    background-color: #cc3333;
    color: #fff;
}

th svg {
    display: block;
}

.messages .c-list {
    width: 39px;
    padding-left: 7px;
}

.c-status {
    width: 18px;
}

.c-from {
    width: 184px;
}

.c-date {
    width: 139px;
}

.messages .sorted {
    background: linear-gradient(#d0d0d0, #b4b4b4 55%, #949494 60%, #999);
}

.sorted svg {
    float: right;
    margin: 3px 5px 0 0;
}

.messages .c-size {
    width: 64px;
    text-align: right;
}

.c-flag {
    width: 20px;
}

.c-attach {
    width: 18px;
}

.dot {
    display: block;
    width: 4px;
    height: 4px;
    margin-left: 24px;
    border: none;
    border-radius: 2px;
    background-color: #999;
}

.messages .bar {
    padding: 1px 7px 0 4px;
}

.icons {
    display: flex;
    gap: 4px;
    margin: 0 15px 0 7px;
}

.pane-toggle {
    display: flex;
    align-items: center;
    gap: 6px;
}

.pane-toggle input {
    appearance: none;
    width: 16px;
    height: 16px;
    margin: 0;
    border: 1px solid #999;
    border-radius: 2px;
    background: #f4f4f4;
    line-height: 14px;
}

.pane-toggle input:checked::after {
    content: "✔";
    font-size: 16px;
    color: #2b3036;
}

.count {
    margin-left: auto;
    margin-right: 13px;
}

.pager {
    display: flex;
    align-items: center;
    gap: 5px;
}

.pager input {
    width: 31px;
    height: 16px;
    padding: 0;
    margin: 0 2px;
    border: 1px solid #666;
    text-align: center;
    color: #333;
}

/* preview pane */
.preview {
    flex: 1;
    background-color: #fff;
    padding: 6px 8px;
}

.headers {
    position: relative;
    flex: none;
    border: 1px solid #ccc;
    background-color: #ebebeb;
}

.headers table {
    width: 100%;
    border-collapse: collapse;
}

.headers th, .headers td {
    height: 20px;
    padding: 0;
    border-bottom: 1px solid #fff;
}

.headers th {
    width: 60px;
    padding-right: 5px;
    text-align: right;
    color: #666;
}

.headers .subject {
    font-weight: bold;
}

.person {
    width: 10px;
    height: 12px;
    margin: 0 1px 0 2px;
    vertical-align: -1px;
}

.expand {
    width: 100%;
    height: 11px;
}

.links {
    position: absolute;
    top: 2px;
    right: 2px;
    display: flex;
    gap: 4px;
}

.message-body {
    padding-top: 11px;
    font-size: 12px;
    line-height: 16px;
    white-space: pre-wrap;
}

.leaf {
    width: 12px;
    height: 12px;
    vertical-align: -2px;
}
```
